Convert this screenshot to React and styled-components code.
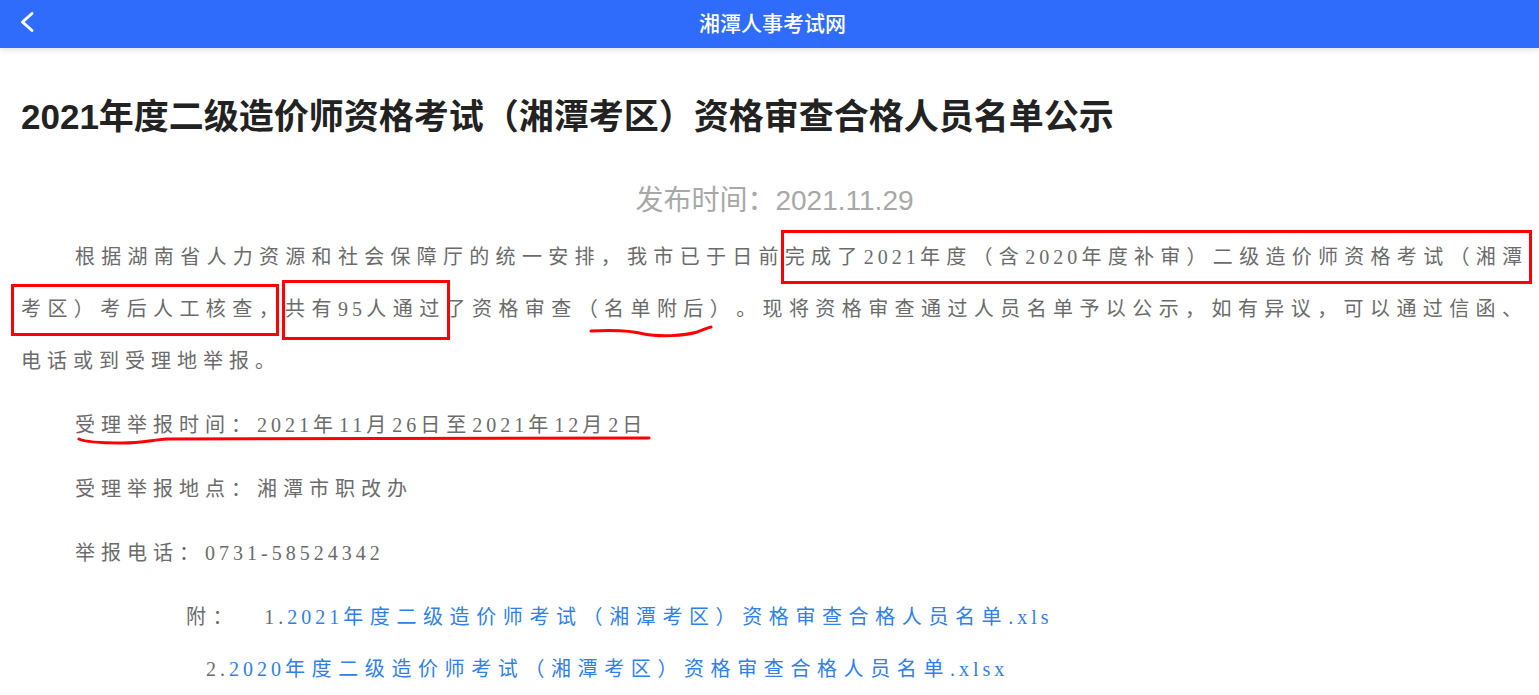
import styled, { createGlobalStyle } from "styled-components";

const GlobalStyle = createGlobalStyle`
  html, body {
    margin: 0;
    padding: 0;
    background: #fff;
    overflow: hidden;
  }
`;

const App = () => {
  return (
    <>
      <GlobalStyle />
      <Header>
        <BackButton aria-label="返回">
          <svg width="16" height="22" viewBox="0 0 16 22">
            <polyline points="13,2.5 3.5,11 13,19.5" fill="none" stroke="#fff" strokeWidth="3" strokeLinecap="round" strokeLinejoin="round" />
          </svg>
        </BackButton>
        <HeaderTitle>湘潭人事考试网</HeaderTitle>
        <span />
      </Header>

      <Page>
        <Title>2021年度二级造价师资格考试（湘潭考区）资格审查合格人员名单公示</Title>
        <PublishDate>发布时间：2021.11.29</PublishDate>

        <Paragraph $indent>
          根据湖南省人力资源和社会保障厅的统一安排，我市已于日前
          <Boxed $t={-16} $r={-4} $b={-16} $l={-4}>
            完成了<Num>2021</Num>年度（含<Num>2020</Num>年度补审）二级造价师资格考试（湘潭
          </Boxed>
          <Boxed $t={-14} $r={6} $b={-16} $l={-10}>考区）考后人工核查，</Boxed>
          <Boxed $t={-18} $r={-4} $b={-20} $l={-3}>
            共有<Num>95</Num>人通过
          </Boxed>
          了资格审查
          <Marked>
            （名单附后）
            <Scribble width="124" height="14" viewBox="0 0 124 14" preserveAspectRatio="none" $top={5} $left={11}>
              <path d="M2 6 C 20 5, 40 5, 55 9 C 70 12, 95 11, 108 7 C 114 5, 118 3, 122 2" />
            </Scribble>
          </Marked>
          。现将资格审查通过人员名单予以公示，如有异议，可以通过信函、电话或到受理地举报。
        </Paragraph>

        <Paragraph $indent>
          <Marked>
            受理举报时间：<Num>2021</Num>年<Num>11</Num>月<Num>26</Num>日至<Num>2021</Num>年<Num>12</Num>月<Num>2</Num>日
            <Scribble width="574" height="10" viewBox="0 0 574 10" preserveAspectRatio="none" $top={-1} $left={2}>
              <path d="M2 4 C 8 7, 20 8, 45 8 C 65 8, 75 5, 90 4 L 572 3" />
            </Scribble>
          </Marked>
        </Paragraph>
        <Paragraph $indent>受理举报地点：湘潭市职改办</Paragraph>
        <Paragraph $indent>
          举报电话：<Num>0731-58524342</Num>
        </Paragraph>

        <Attachments>
          <AttachmentRow $offset={165}>
            <AttachLabel>附：</AttachLabel>
            <Num>1.</Num>
            <FileLink href="#">
              <Num>2021</Num>年度二级造价师考试（湘潭考区）资格审查合格人员名单<Num>.xls</Num>
            </FileLink>
          </AttachmentRow>
          <AttachmentRow $offset={185}>
            <Num>2.</Num>
            <FileLink href="#">
              <Num>2020</Num>年度二级造价师考试（湘潭考区）资格审查合格人员名单<Num>.xlsx</Num>
            </FileLink>
          </AttachmentRow>
        </Attachments>
      </Page>
    </>
  );
};

export default App;

const Header = styled.header`
  display: grid;
  grid-template-columns: 1fr auto 1fr;
  align-items: center;
  height: 48px;
  padding-bottom: 4px;
  box-sizing: border-box;
  background: #2f6cfc;
  box-shadow: 0 2px 6px rgba(0, 0, 0, 0.12);
  position: relative;
  z-index: 1;
`;

const BackButton = styled.button`
  justify-self: start;
  display: flex;
  align-items: center;
  margin-left: 19px;
  padding: 0;
  border: none;
  background: transparent;
  cursor: pointer;
`;

const HeaderTitle = styled.h1`
  margin: 0 0 0 6px;
  color: #fff;
  font-family: "Noto Sans CJK SC", sans-serif;
  font-size: 21px;
  font-weight: 500;
`;

const Page = styled.main`
  padding: 0 11px 0 21px;
  color: #6b6b6b;
  text-spacing-trim: space-all;
  text-autospace: no-autospace;
`;

const Title = styled.h2`
  margin: 44px 0 0;
  color: #222;
  font-family: "Liberation Sans", "Noto Sans CJK SC", sans-serif;
  font-size: 35px;
  font-weight: 700;
  line-height: 50px;
`;

const PublishDate = styled.div`
  margin: 33px 0 4px;
  text-align: center;
  color: #a8a8a8;
  font-family: "Liberation Sans", "Noto Sans CJK SC", sans-serif;
  font-size: 28px;
  line-height: 52px;
`;

const Paragraph = styled.p`
  margin: 0 0 12px;
  font-family: "Liberation Serif", "Noto Sans CJK SC", serif;
  font-size: 20px;
  line-height: 52px;
  letter-spacing: 6px;
  text-align: justify;
  text-indent: ${(p) => (p.$indent ? "54px" : "0")};
`;

const Num = styled.span`
  letter-spacing: 4px;
`;

const Boxed = styled.span`
  position: relative;

  &::after {
    content: "";
    position: absolute;
    top: ${(p) => p.$t}px;
    right: ${(p) => p.$r}px;
    bottom: ${(p) => p.$b}px;
    left: ${(p) => p.$l}px;
    border: 3px solid #ff0000;
    pointer-events: none;
  }
`;

const Marked = styled.span`
  position: relative;
`;

const Scribble = styled.svg`
  position: absolute;
  left: ${(p) => p.$left}px;
  top: calc(100% + ${(p) => p.$top}px);
  overflow: visible;
  pointer-events: none;

  path {
    fill: none;
    stroke: #ff0000;
    stroke-width: 3;
    stroke-linecap: round;
    stroke-linejoin: round;
  }
`;

const Attachments = styled.div`
  font-family: "Liberation Serif", "Noto Sans CJK SC", serif;
  font-size: 20px;
  line-height: 52px;
  letter-spacing: 6.6px;
  white-space: nowrap;
`;

const AttachmentRow = styled.div`
  padding-left: ${(p) => p.$offset}px;
`;

const AttachLabel = styled.span`
  margin-right: 25px;
`;

const FileLink = styled.a`
  color: #2f80ed;
  text-decoration: none;
`;
